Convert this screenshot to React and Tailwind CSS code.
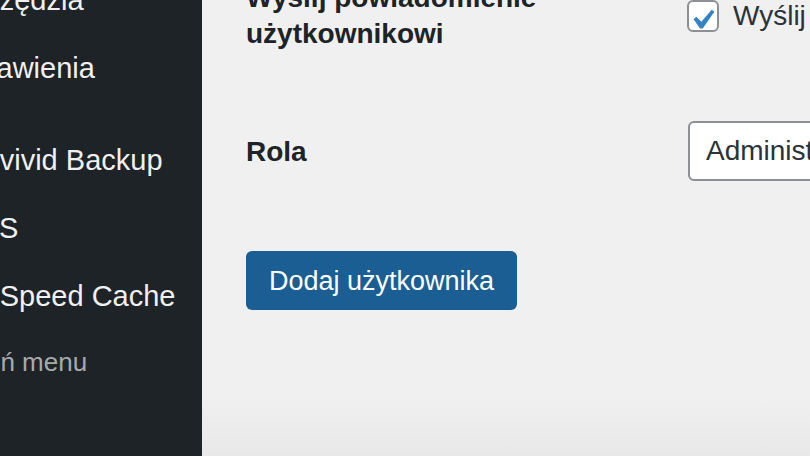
export default function App() {
  const menu = [
    { t: "Narzędzia" },
    { t: "Ustawienia" },
    { t: "WPvivid Backup", extra: "mt-[24px]" },
    { t: "AIOS", extra: "-ml-[4px]" },
    { t: "LiteSpeed Cache" },
  ];
  return (
    <div
      className="flex h-[456px] w-[810px] overflow-hidden"
      style={{ fontFamily: '"Liberation Sans", Arial, sans-serif' }}
    >
      <aside className="w-[202px] shrink-0 bg-[#1d2327] overflow-hidden">
        <div className="-ml-[47px] -mt-[34px] flex flex-col">
          {menu.map((m, i) => (
            <div
              key={i}
              className={`h-[68px] whitespace-nowrap text-[29px] leading-[68px] text-[#f0f0f1] ${m.extra || ""}`}
            >
              {m.t}
            </div>
          ))}
          <div className="-mt-[2px] ml-[7px] h-[68px] whitespace-nowrap text-[26px] leading-[68px] text-[#a7aaad]">
            Zwiń menu
          </div>
        </div>
      </aside>
      <main className="flex-1 overflow-hidden bg-[linear-gradient(to_bottom,#f0f0f0_0%,#f0f0f0_87%,#e8e8e8_100%)] pl-[44px]">
        <div className="-mt-[20px] flex flex-col">
          <div className="grid grid-cols-[441px_1fr]">
            <div className="text-[28px] font-bold leading-[36px] text-[#1d2327]">
              Wyślij powiadomienie
              <br />
              użytkownikowi
            </div>
            <div className="flex items-start gap-[14px] pt-[20px]">
              <span className="relative h-[32px] w-[32px] shrink-0 rounded-[6px] border-2 border-[#8c8f94] bg-white">
                <svg
                  viewBox="0 0 20 20"
                  className="absolute -left-[7px] -top-[2px] h-[40px] w-[40px]"
                >
                  <path
                    d="M14.83 4.89l1.34.94-5.81 8.38H9.02L5.78 9.67l1.34-1.25 2.57 2.4z"
                    fill="#3582c4"
                  />
                </svg>
              </span>
              <span className="whitespace-nowrap text-[28px] leading-[32px] text-[#2c3338]">
                Wyślij nowemu użytkownikowi e-mail o jego koncie
              </span>
            </div>
          </div>
          <div className="mt-[69px] grid grid-cols-[442px_1fr]">
            <div className="pt-[13px] text-[28px] font-bold leading-[36px] text-[#1d2327]">
              Rola
            </div>
            <div className="flex h-[60px] w-[300px] items-center rounded-[6px] border-2 border-[#8c8f94] bg-white pl-[16px]">
              <span className="whitespace-nowrap text-[28px] text-[#2c3338]">
                Administrator
              </span>
            </div>
          </div>
          <div className="mt-[70px]">
            <button className="h-[59px] w-[271px] rounded-[6px] bg-[#1b5e93] pt-[2px] text-[27px] leading-[57px] text-white">
              Dodaj użytkownika
            </button>
          </div>
        </div>
      </main>
    </div>
  );
}
